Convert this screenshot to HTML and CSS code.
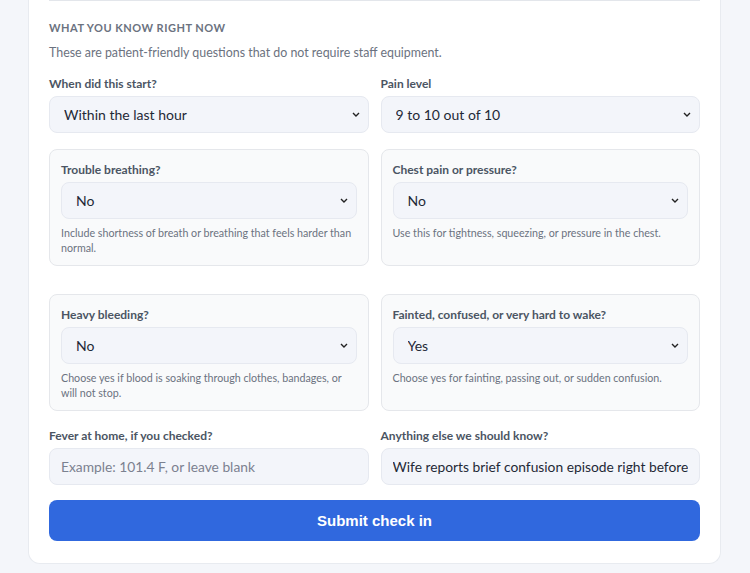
FILE: index.html
```html
<!DOCTYPE html>
<html lang="en">
<head>
  <meta charset="UTF-8">
  <meta name="viewport" content="width=device-width, initial-scale=1.0">
  <title>Check in</title>
  <link rel="stylesheet" href="styles.css">
</head>
<body>
  <div class="panel">
    <section class="section">
      <h3 class="section-title">What you know right now</h3>
      <p class="section-desc">These are patient-friendly questions that do not require staff equipment.</p>

      <div class="grid">
        <div class="field">
          <label for="onset">When did this start?</label>
          <select id="onset">
            <option>Within the last hour</option>
          </select>
        </div>
        <div class="field">
          <label for="pain">Pain level</label>
          <select id="pain">
            <option>9 to 10 out of 10</option>
          </select>
        </div>
      </div>

      <div class="grid cards">
        <div class="card">
          <label for="breathing">Trouble breathing?</label>
          <select id="breathing">
            <option>No</option>
          </select>
          <p class="hint">Include shortness of breath or breathing that feels harder than normal.</p>
        </div>
        <div class="card">
          <label for="chest">Chest pain or pressure?</label>
          <select id="chest">
            <option>No</option>
          </select>
          <p class="hint">Use this for tightness, squeezing, or pressure in the chest.</p>
        </div>
      </div>

      <div class="grid cards last">
        <div class="card">
          <label for="bleeding">Heavy bleeding?</label>
          <select id="bleeding">
            <option>No</option>
          </select>
          <p class="hint">Choose yes if blood is soaking through clothes, bandages, or will not stop.</p>
        </div>
        <div class="card">
          <label for="fainted">Fainted, confused, or very hard to wake?</label>
          <select id="fainted">
            <option>Yes</option>
          </select>
          <p class="hint">Choose yes for fainting, passing out, or sudden confusion.</p>
        </div>
      </div>

      <div class="grid inputs">
        <div class="field">
          <label for="fever">Fever at home, if you checked?</label>
          <input id="fever" type="text" placeholder="Example: 101.4 F, or leave blank">
        </div>
        <div class="field">
          <label for="notes">Anything else we should know?</label>
          <input id="notes" type="text" value="Wife reports brief confusion episode right before arriving">
        </div>
      </div>

      <button class="btn" type="submit">Submit check in</button>
    </section>
  </div>
</body>
</html>
```

FILE: styles.css
```css
body {
  font-family: Lato, "Noto Sans", sans-serif;
  margin: 0;
  background: #f4f6fa;
  color: #1f2937;
}

.panel {
  margin: 0 28px;
  width: 693px;
  box-sizing: border-box;
  background: #fff;
  border: 1px solid #e8ebf0;
  border-top: none;
  border-radius: 0 0 12px 12px;
  padding: 0 20px 22px;
}

.section {
  border-top: 1px solid #e3e6eb;
  padding-top: 19px;
}

.section-title {
  margin: 0;
  font-size: 11px;
  line-height: 16px;
  font-weight: 700;
  letter-spacing: 0.045em;
  text-transform: uppercase;
  color: #6b7280;
}

.section-desc {
  margin: 7px 0 13px;
  font-size: 12.4px;
  line-height: 20px;
  color: #6b7280;
}

.grid {
  display: grid;
  grid-template-columns: 1fr 1fr;
  column-gap: 12px;
  margin-bottom: 16px;
}

.grid.cards {
  margin-bottom: 28px;
}

.grid.cards.last {
  margin-bottom: 17px;
}

.grid.inputs {
  margin-bottom: 15px;
}

.field,
.card {
  display: flex;
  flex-direction: column;
}

.card {
  background: #f9fafb;
  border: 1px solid #e5e7eb;
  border-radius: 8px;
  padding: 12px 11px 10px;
}

label {
  font-size: 12px;
  line-height: 16px;
  font-weight: 700;
  color: #4b5563;
  margin-bottom: 4px;
}

select,
input {
  font-family: inherit;
  font-size: 14px;
  height: 37px;
  box-sizing: border-box;
  padding: 0 14px;
  background-color: #f3f5fa;
  border: 1px solid #e6e9f0;
  border-radius: 8px;
  color: #1f2937;
  width: 100%;
}

select {
  appearance: none;
  padding-right: 28px;
  background-image: url("data:image/svg+xml,%3Csvg xmlns='http://www.w3.org/2000/svg' width='8' height='5' viewBox='0 0 8 5'%3E%3Cpath d='M1 1l3 3 3-3' fill='none' stroke='%23222' stroke-width='1.4'/%3E%3C/svg%3E");
  background-repeat: no-repeat;
  background-position: right 8px center;
}

input {
  padding: 0 11px;
  font-size: 13.8px;
}

input::placeholder {
  color: #7b8190;
}

.hint {
  margin: 6px 0 0;
  font-size: 10.7px;
  line-height: 15px;
  color: #6b7280;
}

.btn {
  display: block;
  width: 100%;
  height: 41px;
  border: none;
  border-radius: 8px;
  background: #3068de;
  color: #fff;
  font-family: "Liberation Sans", Arial, sans-serif;
  font-size: 15px;
  font-weight: 700;
  cursor: pointer;
}
```
